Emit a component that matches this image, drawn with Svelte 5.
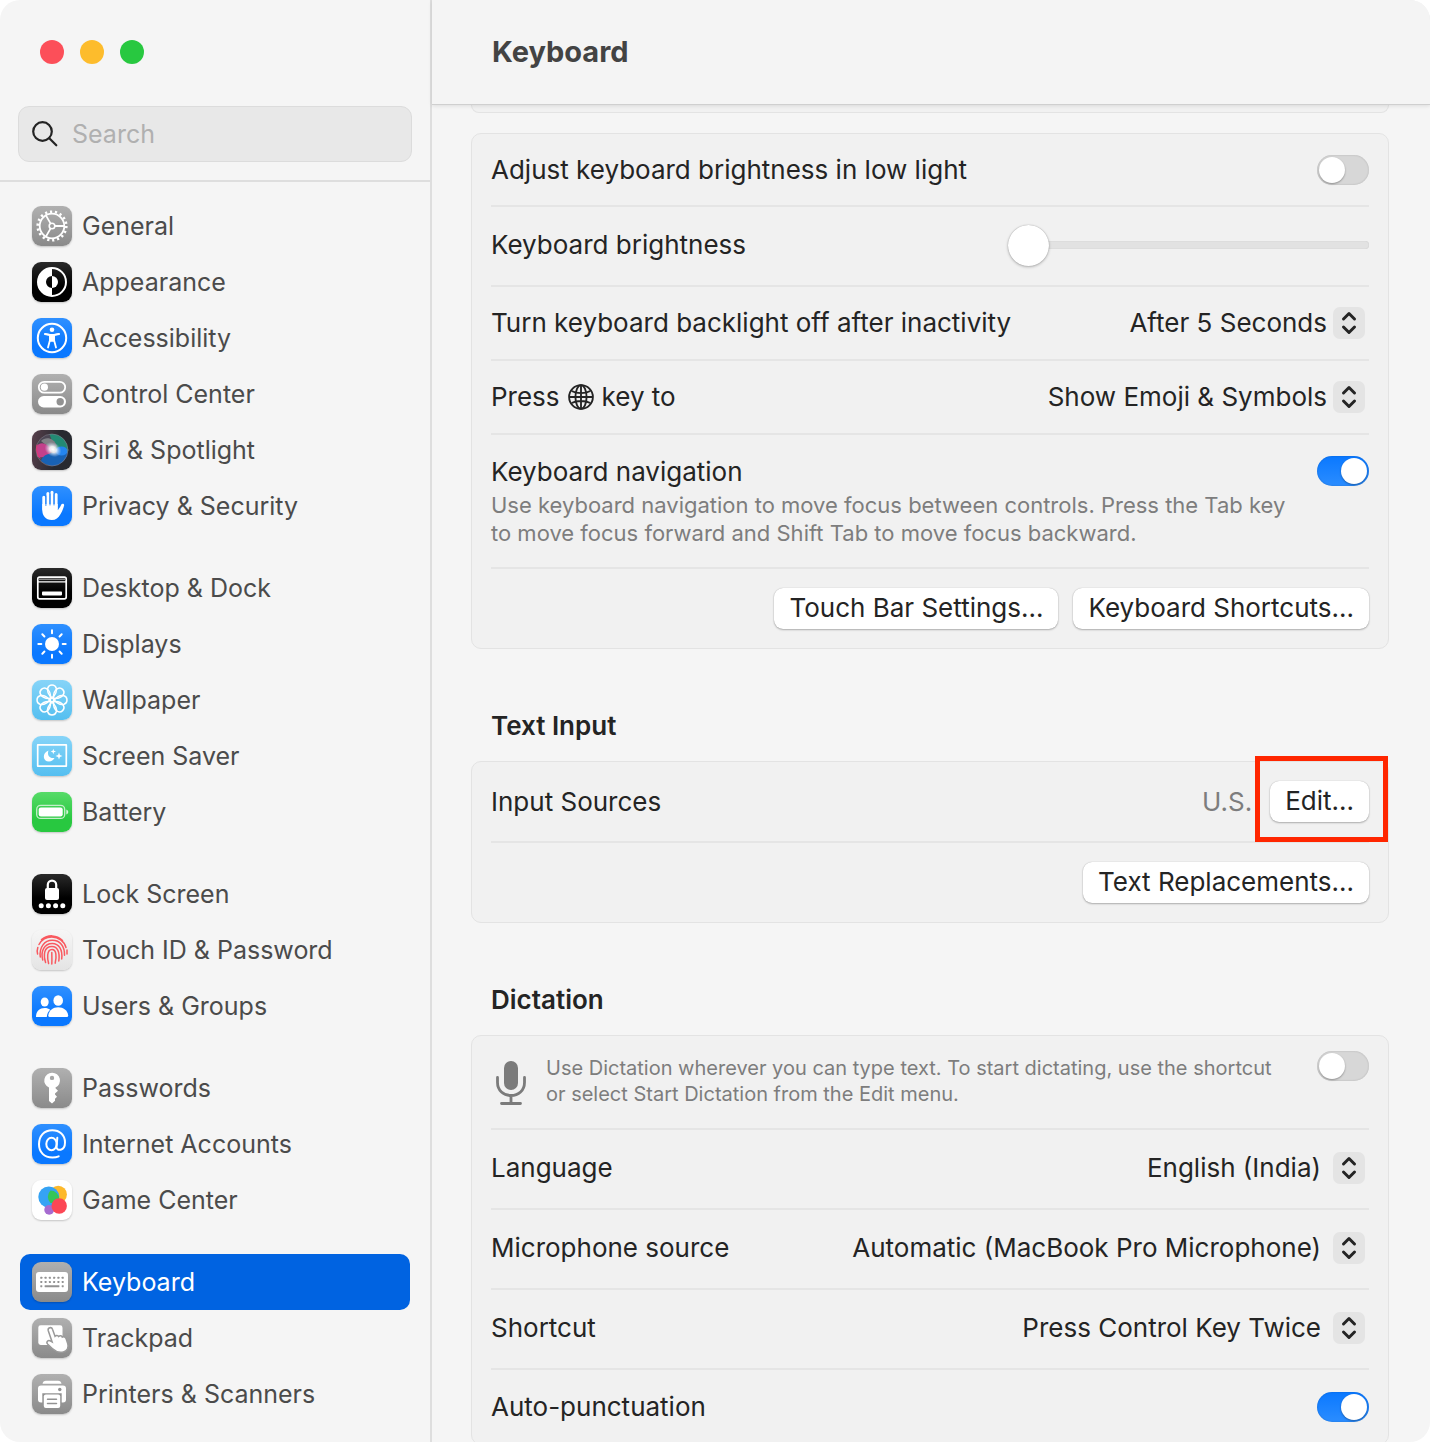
<script>
  const groups = [
    [
      ['general', 'General', 'gray'],
      ['appearance', 'Appearance', 'black'],
      ['accessibility', 'Accessibility', 'blue'],
      ['control', 'Control Center', 'gray'],
      ['siri', 'Siri & Spotlight', 'siri'],
      ['privacy', 'Privacy & Security', 'blue'],
    ],
    [
      ['desktop', 'Desktop & Dock', 'black'],
      ['displays', 'Displays', 'blue'],
      ['wallpaper', 'Wallpaper', 'sky'],
      ['saver', 'Screen Saver', 'sky'],
      ['battery', 'Battery', 'green'],
    ],
    [
      ['lock', 'Lock Screen', 'black'],
      ['touchid', 'Touch ID & Password', 'light'],
      ['users', 'Users & Groups', 'blue'],
    ],
    [
      ['passwords', 'Passwords', 'gray'],
      ['internet', 'Internet Accounts', 'blue'],
      ['game', 'Game Center', 'white'],
    ],
    [
      ['keyboard', 'Keyboard', 'gray'],
      ['trackpad', 'Trackpad', 'gray'],
      ['printers', 'Printers & Scanners', 'gray'],
    ],
  ];

  let selected = $state('keyboard');
  let lowLight = $state(false);
  let brightness = $state(0);
  let navigation = $state(true);
  let dictation = $state(false);
  let punctuation = $state(true);

  const petals = [0, 45, 90, 135, 180, 225, 270, 315];
  const keys = [9.3, 13.6, 17.9, 22.1, 26.4, 30.7];
</script>

{#snippet glyph(name)}
  <svg viewBox="0 0 40 40" fill="none" stroke="#fff" stroke-width="2" stroke-linecap="round" aria-hidden="true">
    {#if name === 'general'}
      <circle cx="20" cy="20" r="12.3" stroke-width="1.8" />
      <circle cx="20" cy="20" r="14.3" stroke-width="2.6" stroke-linecap="butt" stroke-dasharray="2.2 2.792" />
      <circle cx="20" cy="20" r="2.8" stroke-width="1.6" />
      <path d="M23 20h9M18.5 17.4l-4.6-8M18.5 22.6l-4.6 8" stroke-width="1.8" />
    {:else if name === 'appearance'}
      <circle cx="20" cy="20" r="14" />
      <path d="M20 6a14 14 0 0 0 0 28v-8a6 6 0 0 1 0-12z" fill="#fff" stroke="none" />
      <path d="M20 14a6 6 0 0 1 0 12z" fill="#fff" stroke="none" />
    {:else if name === 'accessibility'}
      <circle cx="20" cy="20" r="14.2" />
      <circle cx="20" cy="11.8" r="2.3" fill="#fff" stroke="none" />
      <path d="M13 16l5 1v5l-2 7.5M27 16l-5 1v5l2 7.5" stroke-width="1.8" />
      <path d="M13 16l5.2.8h3.6L27 16M18 17h4v6h-4z" fill="#fff" stroke-width="1.6" />
    {:else if name === 'control'}
      <rect x="6.8" y="7.8" width="26.4" height="10.8" rx="5.4" stroke-width="1.8" />
      <circle cx="12.4" cy="13.2" r="3.6" fill="#fff" stroke="none" />
      <rect x="6" y="22" width="28" height="11.4" rx="5.7" fill="#fff" stroke="none" />
      <circle cx="28.2" cy="27.7" r="3.7" fill="#929292" stroke="none" />
    {:else if name === 'siri'}
      <defs>
        <radialGradient id="siri-core">
          <stop offset="0" stop-color="#fff" />
          <stop offset=".4" stop-color="#fff" stop-opacity=".85" />
          <stop offset="1" stop-color="#b8d0ee" stop-opacity="0" />
        </radialGradient>
        <clipPath id="siri-orb"><circle cx="20" cy="20" r="16" /></clipPath>
      </defs>
      <g clip-path="url(#siri-orb)" stroke="none">
        <circle cx="20" cy="20" r="16" fill="#4b4653" />
        <path d="M17 3c12-2 20 7 19 19-5 3-10-1-14-6z" fill="#238a74" />
        <path d="M9 11c5-5 13-3 16 5l-5 4z" fill="#808085" />
        <path d="M4 17c5-7 11-3 15 2 1 7-7 9-14 8z" fill="#c3408b" />
        <path d="M9 31c2-7 9-9 27-9 0 13-15 19-27 9z" fill="#1862b4" />
        <ellipse cx="29.5" cy="21" rx="6" ry="4.5" fill="#2485ef" />
        <ellipse cx="21" cy="19.5" rx="9" ry="7" fill="url(#siri-core)" transform="rotate(32 21 19.5)" />
      </g>
      <circle cx="20" cy="20" r="16" stroke="#87818f" stroke-opacity=".55" stroke-width="1" />
      <path d="M5 15c-1 5 0 9 3 13" stroke="#e83370" stroke-width="1" />
    {:else if name === 'privacy'}
      <path d="M11.8 11.2v12M15.9 7.4v14M20 6.3v14M24.1 8.4v14" stroke-width="3" />
      <path d="M10.3 18h15.4v6c1.2-.8 2.6-3 3.6-5.4.7-1.7 3.2-1 2.8.8-.8 3.4-2.2 6.4-3.8 9.1C26.5 32 23.8 34 19.8 34c-6.3 0-9.5-4.5-9.5-10z" fill="#fff" stroke="none" />
      <path d="M13.9 10v9.5M18 8v11M22 8v11" stroke="#1c80fb" stroke-width=".9" />
    {:else if name === 'desktop'}
      <rect x="5.8" y="9.2" width="28.4" height="21.6" rx="1.8" stroke-width="1.7" />
      <path d="M6 13.8h28" stroke-width="1.3" />
      <path d="M7 11.3h26" stroke="#888" stroke-width="1.4" />
      <rect x="10" y="23.4" width="20" height="4" rx=".8" fill="#fff" stroke="none" />
    {:else if name === 'displays'}
      <circle cx="20" cy="20" r="7" fill="#fff" stroke="none" />
      {#each petals as angle}
        <path d="M20 9.3V6.3" transform="rotate({angle} 20 20)" />
      {/each}
    {:else if name === 'wallpaper'}
      {#each petals as angle}
        <path d="M20 17.8c-4.5-3.8-5-6.8-4.2-9.8 1.2-4 7.2-4 8.4 0 .8 3 .3 6-4.2 9.8z" stroke-width="1.5" transform="rotate({angle} 20 20)" />
      {/each}
      <circle cx="20" cy="20" r="1.7" stroke-width="1.3" />
    {:else if name === 'saver'}
      <rect x="5.7" y="8.9" width="28.6" height="21.2" stroke-width="1.7" stroke-linejoin="round" />
      <path d="M16.5 14.5c-1.8 4.8 1.2 8.3 6 7.5-1.2 2.2-3 3.5-5.5 3.5-6.3 0-7.2-8.5-.5-11z" fill="#fff" stroke="none" />
      <path d="M21.3 12.8l.7 2 2 .7-2 .7-.7 2-.7-2-2-.7 2-.7zM27 16.5l.9 2.6 2.6.9-2.6.9L27 23.5l-.9-2.6-2.6-.9 2.6-.9z" fill="#fff" stroke="none" />
    {:else if name === 'battery'}
      <rect x="4.7" y="13.4" width="28" height="13" rx="4" stroke="#c3efc9" stroke-width="1.3" />
      <rect x="6.7" y="15.4" width="24" height="9" rx="2.2" fill="#fff" stroke="none" />
      <path d="M34.3 17.5v5q2-.8 2-2.5t-2-2.5z" fill="#d4f4d8" stroke="none" />
    {:else if name === 'lock'}
      <path d="M15.8 15v-4.2a4.2 4.2 0 0 1 8.4 0V15" stroke-width="2.2" />
      <rect x="13" y="14" width="14" height="12" rx="2" fill="#fff" stroke="none" />
      {#each [9.2, 16.4, 23.6, 30.8] as x}
        <circle cx={x} cy="31.7" r="2.5" fill="#fff" stroke="none" />
      {/each}
    {:else if name === 'touchid'}
      <g stroke="#f9595f" stroke-width="1.5">
        <path d="M9.5 9.5c6.5-5 15-5 21 1M7 14.5c3-5.5 8-7.5 12.8-7.5 6.5 0 12.5 4 14.2 10.5M35 20v4M5.6 24c-.6-2.5-.5-4.5.2-6.5" />
        <path d="M8.3 27c-1.3-9.5 4-16.7 12-16.7 8 0 12.5 6 12.2 15" />
        <path d="M10.8 30c-2.5-9 1.7-16.6 9.5-16.6 6.5 0 10.5 6 9.4 15.5" />
        <path d="M13.6 32.5c-2.2-7-2.1-16 6.4-16 5.5 0 8 5.5 6.8 14.5" />
        <path d="M16.6 33.5c-1.2-4-2.3-14 3.4-14 4.5 0 4.7 7 3.2 13.7M19.8 22.5c0 3 .3 7.5 0 11.5" />
      </g>
    {:else if name === 'users'}
      <g fill="#fff" stroke="none">
        <ellipse cx="12.7" cy="16" rx="4" ry="4.5" />
        <path d="M4 31c0-6 3.8-9 8.7-9 2.2 0 4 .6 5.4 1.7-1.9 1.8-3 4-3.3 7.3z" />
        <ellipse cx="26.2" cy="14.5" rx="4.8" ry="5.3" />
        <path d="M16.3 29.5C17 24.3 21 21.3 26.2 21.3s9.3 3 10 8.2q.1 1.5-1.5 1.5H17.8q-1.6 0-1.5-1.5z" />
      </g>
    {:else if name === 'passwords'}
      <path fill-rule="evenodd" d="M20 4.8a7.7 7.7 0 0 0-3 14.8V33l3 2.4 3-2.7v-2l2-2-2-2.2v-1l3-2.7-2.5-2.5v-.8A7.7 7.7 0 0 0 20 4.8zm0 2.9a2.2 2.2 0 1 1 0 4.4 2.2 2.2 0 0 1 0-4.4z" fill="#fff" stroke="none" />
    {:else if name === 'internet'}
      <ellipse cx="19.5" cy="20" rx="5.2" ry="6.3" />
      <path d="M25.3 13.8l-.8 9c-.2 4.7 8.5 4.5 8.5-4.3C33 10.8 27.5 6.3 20.3 6.3 12 6.3 7 12 7 20.3c0 8 5.2 13.2 13.4 13.2 2.5 0 4.6-.4 6.3-1.2" />
    {:else if name === 'game'}
      <g stroke="none">
        <circle cx="26.2" cy="14.5" r="8.7" fill="#fdb92b" />
        <circle cx="16.8" cy="17" r="10.5" fill="#35a3f4" />
        <path d="M18.5 10.5a8.7 8.7 0 0 1 8.7 8.5 10.5 10.5 0 0 1-8.7 4 8.7 8.7 0 0 1 0-12.5z" fill="#35c657" />
        <circle cx="17.2" cy="29.8" r="4.9" fill="#a66bd0" />
        <circle cx="27.2" cy="26" r="7.7" fill="#fc4755" />
      </g>
    {:else if name === 'keyboard'}
      <rect x="4" y="10" width="32" height="20" rx="3" fill="#fff" stroke="none" />
      <g fill="#929292" stroke="none">
        {#each keys as x}
          <rect x={x - 1} y="14.8" width="2" height="2" rx=".4" />
          <rect x={x - 1} y="19" width="2" height="2" rx=".4" />
        {/each}
        <rect x="8.3" y="23.2" width="2" height="2" rx=".4" />
        <rect x="12.6" y="23.2" width="14.8" height="2" rx=".4" />
        <rect x="29.7" y="23.2" width="2" height="2" rx=".4" />
      </g>
    {:else if name === 'trackpad'}
      <rect x="6.3" y="7.3" width="24.2" height="19.7" rx="2.4" fill="#fff" stroke="none" />
      <path d="M16.2 12.5c-.7-3 3.4-4 4.3-1.2l2.5 7c1-1.3 3-1.2 3.7.2 1.2-1.2 3-.8 3.6.7 1.6-.9 3.3 0 3.9 1.8l1.5 4.5c1.5 4.5-.9 7.6-4.4 8.5-4.2 1-8-.7-11-3.5l-4.500-4.200c-2.200-2.300.3-4.900 2.800-3.300l1.500.9z" fill="#fff" stroke="#9a9a9a" stroke-width="1.5" />
    {:else if name === 'printers'}
      <path d="M10.5 9.7q.5-2.9 3.5-2.9h12q3 0 3.5 2.9z" fill="#fff" stroke="none" />
      <rect x="6" y="11.5" width="28" height="17" rx="3" fill="#fff" stroke="none" />
      <circle cx="27.8" cy="15.5" r="1.7" fill="#929292" stroke="none" />
      <path d="M10.3 19.2h19.4v10H10.3z" fill="#929292" stroke="none" />
      <rect x="11.8" y="20.5" width="16.4" height="13.5" rx="2" fill="#fff" stroke="none" />
      <path d="M15.5 25.3h9M15.5 29.5h9" stroke="#929292" stroke-width="1.5" />
    {/if}
  </svg>
{/snippet}

{#snippet popup(id, options, wide)}
  <span class="popup" class:wide>
    <select {id}>
      {#each options as option}
        <option>{option}</option>
      {/each}
    </select>
    <svg viewBox="0 0 32 32" aria-hidden="true">
      <path d="M10.5 12l5.5-5.500 5.500 5.500M10.500 20l5.500 5.500 5.500-5.500" />
    </svg>
  </span>
{/snippet}

<div class="window">
  <aside>
    <div class="lights">
      <button class="close" aria-label="Close"></button>
      <button class="minimize" aria-label="Minimize"></button>
      <button class="zoom" aria-label="Zoom"></button>
    </div>
    <label class="search">
      <svg viewBox="0 0 28 28" aria-hidden="true"><circle cx="11.5" cy="11.5" r="9.3" /><path d="M18.3 18.3l7 7" /></svg>
      <input type="search" placeholder="Search" aria-label="Search" />
    </label>
    <nav>
      {#each groups as group}
        <ul>
          {#each group as [id, label, tone]}
            <li>
              <button class="item" class:selected={selected === id} onclick={() => (selected = id)}>
                <span class="icon {tone}">{@render glyph(id)}</span>
                <span>{label}</span>
              </button>
            </li>
          {/each}
        </ul>
      {/each}
    </nav>
  </aside>

  <main>
    <header><h1>Keyboard</h1></header>
    <div class="content">
      <div class="card tail"></div>

      <section class="card">
        <div class="row first">
          <label for="low-light">Adjust keyboard brightness in low light</label>
          <input id="low-light" class="switch" type="checkbox" role="switch" bind:checked={lowLight} />
        </div>
        <div class="row tall">
          <label for="brightness">Keyboard brightness</label>
          <input id="brightness" class="slider" type="range" min="0" max="100" bind:value={brightness} />
        </div>
        <div class="row">
          <label for="backlight">Turn keyboard backlight off after inactivity</label>
          {@render popup('backlight', ['After 5 Seconds', 'After 10 Seconds', 'Never'], false)}
        </div>
        <div class="row">
          <label for="globe" class="globe">
            Press
            <svg viewBox="0 0 28 28" aria-label="globe"><circle cx="14" cy="14" r="12.8" /><ellipse cx="14" cy="14" rx="6" ry="12.8" /><path d="M14 2v24M2 14h24M4 7.5c5 3 15 3 20 0M4 20.5c5-3 15-3 20 0" /></svg>
            key to
          </label>
          {@render popup('globe', ['Show Emoji & Symbols', 'Change Input Source', 'Do Nothing'], false)}
        </div>
        <div class="row described">
          <div>
            <label for="navigation">Keyboard navigation</label>
            <p>Use keyboard navigation to move focus between controls. Press the Tab key to move focus forward and Shift Tab to move focus backward.</p>
          </div>
          <input id="navigation" class="switch" type="checkbox" role="switch" bind:checked={navigation} />
        </div>
        <div class="row actions">
          <button class="push">Touch Bar Settings...</button>
          <button class="push">Keyboard Shortcuts...</button>
        </div>
      </section>

      <h2>Text Input</h2>
      <section class="card">
        <div class="row sources">
          <span>Input Sources</span>
          <span class="source">
            U.S.
            <span class="marked"><button class="push">Edit...</button></span>
          </span>
        </div>
        <div class="row actions">
          <button class="push">Text Replacements...</button>
        </div>
      </section>

      <h2>Dictation</h2>
      <section class="card">
        <div class="row dictation">
          <svg viewBox="0 0 30 46" aria-hidden="true"><rect x="8" y="1" width="14" height="29" rx="7" /><path d="M1.5 17.5v5c0 8 6 13 13.5 13s13.5-5 13.5-13v-5M15 35.5v8M5.5 43.5h19" /></svg>
          <label for="dictation">Use Dictation wherever you can type text. To start dictating, use the shortcut or select Start Dictation from the Edit menu.</label>
          <input id="dictation" class="switch" type="checkbox" role="switch" bind:checked={dictation} />
        </div>
        <div class="row tall">
          <label for="language">Language</label>
          {@render popup('language', ['English (India)', 'English (US)'], true)}
        </div>
        <div class="row tall">
          <label for="microphone">Microphone source</label>
          {@render popup('microphone', ['Automatic (MacBook Pro Microphone)', 'MacBook Pro Microphone'], true)}
        </div>
        <div class="row tall">
          <label for="shortcut">Shortcut</label>
          {@render popup('shortcut', ['Press Control Key Twice', 'Off'], true)}
        </div>
        <div class="row">
          <label for="punctuation">Auto-punctuation</label>
          <input id="punctuation" class="switch" type="checkbox" role="switch" bind:checked={punctuation} />
        </div>
      </section>
    </div>
  </main>
</div>

<style>
  :global(body) {
    background: #fff;
  }
  * {
    box-sizing: border-box;
  }
  .window {
    display: grid;
    grid-template-columns: 432px 1fr;
    height: 100vh;
    overflow: hidden;
    border-radius: 20px;
    background: #f5f5f5;
    color: #242424;
    font: 26px/32px Inter, 'Liberation Sans', sans-serif;
  }
  button,
  input,
  select {
    font: inherit;
    color: inherit;
    margin: 0;
  }
  button {
    border: 0;
    padding: 0;
  }
  svg {
    display: block;
    flex: none;
  }

  /* Sidebar */
  aside {
    display: flex;
    flex-direction: column;
    min-height: 0;
    border-right: 2px solid #dedede;
    font-size: 25px;
  }
  .lights {
    display: flex;
    gap: 16px;
    padding: 40px 40px 42px;
  }
  .lights button {
    width: 24px;
    height: 24px;
    border-radius: 50%;
  }
  .close {
    background: #fc4f59;
  }
  .minimize {
    background: #fdbc2c;
  }
  .zoom {
    background: #28c840;
  }
  .search {
    display: flex;
    align-items: center;
    gap: 13px;
    height: 56px;
    margin: 0 18px;
    padding: 0 12px;
    border: 1px solid #dcdcdc;
    border-radius: 11px;
    background: #e8e8e8;
  }
  .search svg {
    width: 28px;
    height: 28px;
    fill: none;
    stroke: #242424;
    stroke-width: 2.2;
    stroke-linecap: round;
  }
  .search input {
    flex: 1;
    min-width: 0;
    padding: 0;
    border: 0;
    outline: 0;
    background: none;
    appearance: none;
  }
  .search input::placeholder {
    color: #b0b0b0;
  }
  nav {
    flex: 1;
    min-height: 0;
    display: flex;
    flex-direction: column;
    gap: 26px;
    margin-top: 18px;
    padding: 16px 20px 0;
    border-top: 2px solid #dedede;
    overflow-y: auto;
    scrollbar-width: none;
  }
  ul {
    margin: 0;
    padding: 0;
    list-style: none;
  }
  .item {
    display: flex;
    align-items: center;
    gap: 10px;
    width: 100%;
    height: 56px;
    padding: 0 12px;
    border-radius: 10px;
    background: none;
    color: #4b4b4b;
    text-align: left;
  }
  .item.selected {
    background: #0063e1;
    color: #fff;
  }
  .icon {
    flex: none;
    width: 40px;
    height: 40px;
    border-radius: 9px;
    box-shadow: 0 1px 2px #0003;
  }
  .gray {
    background: linear-gradient(#b0b0b0, #8a8a8a);
  }
  .black {
    background: linear-gradient(#2a2a2a, #000 60%);
  }
  .blue {
    background: linear-gradient(#2f90ff, #0a78ff 70%);
  }
  .sky {
    background: linear-gradient(#86d4f8, #55bff0);
  }
  .green {
    background: linear-gradient(#57db68, #28c840 70%);
  }
  .siri {
    background: linear-gradient(100deg, #58404c, #282a30 60%);
  }
  .light {
    background: linear-gradient(#f6f6f6, #e4e4e4);
  }
  .white {
    background: #fff;
  }

  /* Main pane */
  main {
    display: flex;
    flex-direction: column;
    min-width: 0;
    min-height: 0;
  }
  header {
    z-index: 1;
    display: flex;
    align-items: center;
    height: 105px;
    flex: none;
    padding: 0 60px;
    border-bottom: 1px solid #cfcfcf;
    background: #f4f4f4;
    box-shadow: 0 1px 4px #0000001a;
  }
  h1 {
    margin: 0;
    color: #434343;
    font-size: 29px;
    line-height: 32px;
    font-weight: 700;
  }
  .content {
    flex: 1;
    min-height: 0;
    padding: 0 41px 0 39px;
    overflow-y: auto;
    scrollbar-width: none;
  }
  h2 {
    margin: 60px 20px 18px;
    font-size: 26px;
    line-height: 34px;
    font-weight: 600;
  }
  .card {
    padding: 0 19px;
    border: 1px solid #e3e3e3;
    border-radius: 10px;
    background: #f1f1f1;
  }
  .tail {
    height: 8px;
    margin-bottom: 20px;
    border-top: 0;
    border-top-left-radius: 0;
    border-top-right-radius: 0;
  }
  .row {
    display: flex;
    align-items: center;
    justify-content: space-between;
    gap: 20px;
    min-height: 74px;
    border-bottom: 2px solid #e5e5e5;
  }
  .row:last-child {
    border-bottom: 0;
  }
  .first {
    min-height: 73px;
  }
  .tall {
    min-height: 80px;
    padding-bottom: 3px;
  }
  .sources {
    min-height: 81px;
  }
  .described {
    align-items: flex-start;
    padding: 21px 0 20px;
  }
  .described p {
    margin: 3px 0 0;
    color: #7d7d7d;
    font-size: 22px;
    line-height: 28px;
  }
  .actions {
    justify-content: flex-end;
    gap: 15px;
    padding: 19px 0;
  }
  .push {
    height: 41px;
    padding: 0 15px 2px;
    border-radius: 9px;
    background: #fff;
    box-shadow: 0 0 1px #0004, 0 1px 2px #0004;
    white-space: nowrap;
  }
  .source {
    display: flex;
    align-items: center;
    gap: 18px;
    color: #7d7d7d;
  }
  .marked {
    position: relative;
    color: #242424;
  }
  .marked::after {
    content: '';
    position: absolute;
    inset: -25px -19px -20px -15px;
    border: 5px solid #ff2600;
    pointer-events: none;
  }
  .dictation {
    align-items: flex-start;
    justify-content: flex-start;
    padding: 15px 0 21px;
  }
  .dictation svg {
    width: 30px;
    height: 46px;
    margin: 9px 0 0 5px;
    fill: none;
    stroke: #7b7b7b;
    stroke-width: 2.8;
    stroke-linecap: round;
  }
  .dictation rect {
    fill: #7b7b7b;
    stroke: none;
  }
  .dictation label {
    flex: 1;
    margin-top: 4px;
    padding-right: 8px;
    color: #7d7d7d;
    font-size: 20px;
    line-height: 26px;
  }
  .globe {
    display: flex;
    align-items: center;
    gap: 8px;
  }
  .globe svg {
    width: 26px;
    height: 26px;
    fill: none;
    stroke: #242424;
    stroke-width: 2;
  }

  /* Controls */
  .switch {
    appearance: none;
    flex: none;
    width: 52px;
    height: 30px;
    padding: 2px;
    border-radius: 15px;
    background: #d7d7d7;
    box-shadow: inset 0 0 2px #0003;
  }
  .switch::before {
    content: '';
    display: block;
    width: 26px;
    height: 26px;
    border-radius: 50%;
    background: #fff;
    box-shadow: 0 1px 2px #0005;
  }
  .switch:checked {
    background: linear-gradient(#0a78ff, #2b8dff);
  }
  .switch:checked::before {
    margin-left: 22px;
  }
  .slider {
    appearance: none;
    width: 361px;
    height: 41px;
    background: none;
  }
  .slider::-webkit-slider-runnable-track {
    height: 8px;
    border-radius: 4px;
    background: #e2e2e2;
    box-shadow: inset 0 0 1px #0003;
  }
  .slider::-webkit-slider-thumb {
    appearance: none;
    width: 41px;
    height: 41px;
    margin-top: -16px;
    border-radius: 50%;
    background: #fff;
    box-shadow: 0 0 1px #0005, 0 1px 3px #0004;
  }
  .popup {
    display: grid;
    align-items: center;
    padding-right: 4px;
  }
  .popup select,
  .popup svg {
    grid-area: 1 / 1;
  }
  .popup select {
    appearance: none;
    field-sizing: content;
    padding: 0 38px 0 0;
    border: 0;
    background: none;
  }
  .popup.wide select {
    padding-right: 44px;
  }
  .popup svg {
    justify-self: end;
    width: 32px;
    height: 32px;
    border-radius: 7px;
    background: #e4e4e4;
    fill: none;
    stroke: #242424;
    stroke-width: 3;
    stroke-linecap: round;
    stroke-linejoin: round;
    pointer-events: none;
  }
</style>
